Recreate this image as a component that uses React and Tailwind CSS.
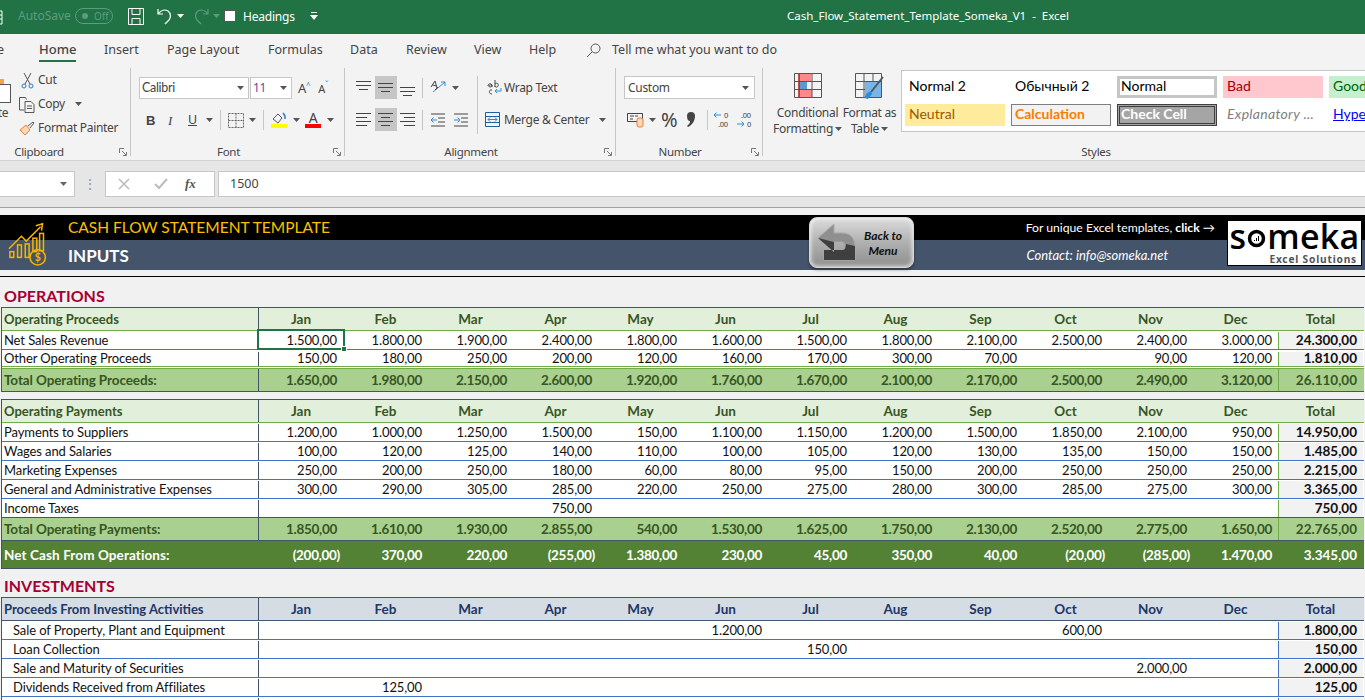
import React from "react";

const CAL = { fontFamily: "Lato, sans-serif" };

const MONTHS = ["Jan", "Feb", "Mar", "Apr", "May", "Jun", "Jul", "Aug", "Sep", "Oct", "Nov", "Dec"];

const proceeds = [
  ["Net Sales Revenue", ["1.500,00", "1.800,00", "1.900,00", "2.400,00", "1.800,00", "1.600,00", "1.500,00", "1.800,00", "2.100,00", "2.500,00", "2.400,00", "3.000,00"], "24.300,00"],
  ["Other Operating Proceeds", ["150,00", "180,00", "250,00", "200,00", "120,00", "160,00", "170,00", "300,00", "70,00", "", "90,00", "120,00"], "1.810,00"],
];
const payments = [
  ["Payments to Suppliers", ["1.200,00", "1.000,00", "1.250,00", "1.500,00", "150,00", "1.100,00", "1.150,00", "1.200,00", "1.500,00", "1.850,00", "2.100,00", "950,00"], "14.950,00"],
  ["Wages and Salaries", ["100,00", "120,00", "125,00", "140,00", "110,00", "100,00", "105,00", "120,00", "130,00", "135,00", "150,00", "150,00"], "1.485,00"],
  ["Marketing Expenses", ["250,00", "200,00", "250,00", "180,00", "60,00", "80,00", "95,00", "150,00", "200,00", "250,00", "250,00", "250,00"], "2.215,00"],
  ["General and Administrative Expenses", ["300,00", "290,00", "305,00", "285,00", "220,00", "250,00", "275,00", "280,00", "300,00", "285,00", "275,00", "300,00"], "3.365,00"],
  ["Income Taxes", ["", "", "", "750,00", "", "", "", "", "", "", "", ""], "750,00"],
];
const investing = [
  ["Sale of Property, Plant and Equipment", ["", "", "", "", "", "1.200,00", "", "", "", "600,00", "", ""], "1.800,00"],
  ["Loan Collection", ["", "", "", "", "", "", "150,00", "", "", "", "", ""], "150,00"],
  ["Sale and Maturity of Securities", ["", "", "", "", "", "", "", "", "", "", "2.000,00", ""], "2.000,00"],
  ["Dividends Received from Affiliates", ["", "125,00", "", "", "", "", "", "", "", "", "", ""], "125,00"],
  ["", ["", "", "", "", "", "", "", "", "", "", "", ""], ""],
];

const Cells = ({ values, selected }) =>
  values.map((v, i) => (
    <div
      key={i}
      className={`relative shrink-0 h-full flex items-center justify-end ${i === 0 ? "w-[84px]" : "w-[85px]"} ${v.startsWith("(") ? "pr-[3px]" : "pr-[6px]"}`}
    >
      {v}
      {selected && i === 0 && (
        <div className="absolute left-[-2px] top-[-3px] w-[88px] h-[21px] border-2 border-[#217346]">
          <div className="absolute right-[-4px] bottom-[-4px] w-[6px] h-[6px] bg-[#217346] border border-white" />
        </div>
      )}
    </div>
  ));

const HeaderRow = ({ title, tone }) => (
  <div className={`flex h-[23px] border-b font-bold text-[13.5px] ${tone === "green" ? "bg-[#e2efda] text-[#375623] border-[#70ad47]" : "bg-[#d6dce4] text-[#203764] border-[#44546a]"}`}>
    <div className="w-[257px] shrink-0 border-r border-[#44546a] pl-[2px] pt-[1px] flex items-center text-[13px]">{title}</div>
    {MONTHS.map((m, i) => (
      <div key={m} className={`shrink-0 flex items-center justify-center ${i === 0 ? "w-[84px]" : "w-[85px]"}`}>{m}</div>
    ))}
    <div className="w-[85px] shrink-0 flex items-center justify-center">Total</div>
  </div>
);

const DataRow = ({ row, indent, line, sideLine, double, selected }) => (
  <div className={`flex h-[19px] bg-white text-[13px] tracking-[-0.1px] text-[#111] ${double ? "border-b-[3px] border-double border-[#70ad47] pt-[2px]" : "border-b pt-[1px]"} ${double ? "" : line}`}>
    <div className={`w-[257px] shrink-0 border-r border-[#44546a] flex items-center ${indent ? "pl-[11px]" : "pl-[2px]"}`}>{row[0]}</div>
    <Cells values={row[1]} selected={selected} />
    <div className={`w-[85px] shrink-0 bg-[#f2f2f2] border-l ${sideLine} font-bold text-[13.5px] tracking-normal pr-[6px] pb-[1px] flex items-center justify-end`}>{row[2]}</div>
  </div>
);

const TotalRow = ({ title, values, total }) => (
  <div className="flex h-[23px] bg-[#a9d08e] text-[#375623] font-bold text-[13.5px] tracking-[-0.3px] border-b border-[#44546a]">
    <div className="w-[257px] shrink-0 border-r border-[#44546a] pl-[2px] flex items-center tracking-[-0.1px]">{title}</div>
    <Cells values={values} />
    <div className="w-[85px] shrink-0 border-l border-[#70ad47] pr-[6px] flex items-center justify-end tracking-normal">{total}</div>
  </div>
);

const Lines = ({ rows }) => (
  <svg width="22" height="22" viewBox="0 0 22 22" stroke="#444" strokeWidth="1" shapeRendering="crispEdges">
    {rows.map((r, i) => (
      <line key={i} x1={r[0]} x2={r[1]} y1={r[2]} y2={r[2]} />
    ))}
  </svg>
);

const Btn = ({ on, rows }) => (
  <div className={`w-[22px] h-[23px] flex items-center justify-center ${on ? "bg-[#c6c6c6]" : ""}`}>
    <Lines rows={rows} />
  </div>
);

const Caret = ({ color = "#555" }) => (
  <svg width="7" height="4" viewBox="0 0 7 4"><path d="M0 0h7L3.5 4z" fill={color} /></svg>
);

const Launcher = () => (
  <svg width="8" height="8" viewBox="0 0 8 8" fill="none" stroke="#777"><path d="M.5 5V.5H5M3 3l4 4M7.5 4v3.5H4" /></svg>
);

const Sep = ({ h = "h-[20px]" }) => <div className={`w-px ${h} bg-[#c6c6c6]`} />;

const Group = ({ width, label, labelPad = "pr-[18px]", children, launcher = true }) => (
  <div className={`relative shrink-0 h-full flex flex-col border-r border-[#c6c6c6] ${width}`}>
    <div className="flex-1 min-h-0">{children}</div>
    <div className={`h-[15px] pt-[6px] flex items-center justify-center text-[11.5px] text-[#444] leading-none ${labelPad}`}>{label}</div>
    {launcher && <div className="absolute right-[3px] bottom-[0px] leading-none"><Launcher /></div>}
  </div>
);

const StyleCell = ({ className, children }) => (
  <div className={`w-[100px] h-[22px] shrink-0 flex items-center pb-[2px] text-[14px] leading-none ${className}`} style={CAL}>{children}</div>
);

const GrowthIcon = () => (
  <svg width="46" height="46" viewBox="0 0 48 48" fill="none" stroke="#f5b400" strokeWidth="1.6">
    <path d="M1 30 14 17l5 5L34 7" />
    <path d="M29 6l7-2-1 7" />
    <rect x="2" y="33" width="4" height="6" />
    <rect x="10" y="26" width="4" height="13" />
    <rect x="18" y="25" width="4" height="14" />
    <rect x="26" y="19" width="4" height="14" />
    <rect x="33" y="14" width="4" height="18" />
    <circle cx="31" cy="39" r="8" />
    <text x="31" y="43" fontSize="11" fontWeight="700" fill="#f5b400" stroke="none" textAnchor="middle" fontFamily="Lato, sans-serif">$</text>
  </svg>
);

const App = () => {
  return (
    <div className="w-[1365px] h-[700px] overflow-hidden bg-[#f1f1f1] flex flex-col" style={{ fontFamily: '"Noto Sans", sans-serif' }}>
      {/* title bar */}
      <div className="relative h-[34px] shrink-0 bg-[#217346] flex items-center pb-[2px] text-white text-[12px]">
        <svg className="absolute left-[-7px] top-[10px]" width="11" height="15" viewBox="0 0 11 15" fill="none" stroke="#fff"><path d="M0 1h9v13H0M0 5h9M0 9h9M5 1v13" /></svg>
        <span className="ml-[18px] w-[50px] text-[#5d9c7f] text-[12px]">AutoSave</span>
        <div className="ml-[7px] w-[38px] h-[16px] rounded-full border border-[#5d9c7f] flex items-center pl-[6px] gap-[6px]">
          <div className="w-[6px] h-[6px] rounded-full bg-[#5d9c7f]" />
          <span className="text-[10px] text-[#5d9c7f] leading-none">Off</span>
        </div>
        <svg className="ml-[15px]" width="16" height="17" viewBox="0 0 16 17" fill="none" stroke="#fff"><path d="M.5.5h15v16H.5zM4 .5v6h8v-6M4 16.5v-6h8v6" /></svg>
        <svg className="ml-[13px]" width="16" height="18" viewBox="0 0 16 18" fill="none" stroke="#fff" strokeWidth="1.2"><path d="M1 2v5h5M1 7c3-4 7-5 10-3s3 7 1 9l-4 4" /></svg>
        <div className="ml-[4px]"><Caret color="#fff" /></div>
        <svg className="ml-[10px]" width="15" height="18" viewBox="0 0 15 18" fill="none" stroke="#5d9c7f" strokeWidth="1.2"><path d="M14 2v5H9M14 7c-3-4-7-5-10-3S1 11 3 13l4 4" /></svg>
        <div className="ml-[4px]"><Caret color="#5d9c7f" /></div>
        <div className="ml-[4px] w-[12px] h-[12px] bg-white border border-[#555]" />
        <span className="ml-[7px] w-[49px] text-[12px] tracking-[-0.2px] pt-[1px]">Headings</span>
        <svg className="ml-[18px]" width="8" height="8" viewBox="0 0 8 8" fill="#fff"><path d="M1 0h6v1H1zM0 3h8L4 8z" /></svg>
        <div className="absolute left-[787px] top-0 h-full pb-[2px] flex items-center text-[11.5px]">Cash_Flow_Statement_Template_Someka_V1&nbsp; -&nbsp; Excel</div>
      </div>

      {/* tabs */}
      <div className="h-[34px] shrink-0 bg-[#f3f3f3] flex items-center pb-[2px] text-[12.5px] text-[#444] relative">
        <span className="ml-[-3px] w-[42px]">e</span>
        <div className="relative font-medium text-[13px] text-[#444] w-[37px]">
          Home
          <div className="absolute left-0 right-0 top-[20px] h-[2px] bg-[#217346]" />
        </div>
        <span className="ml-[28px] w-[32px]">Insert</span>
        <span className="ml-[31px] w-[71px] whitespace-nowrap">Page Layout</span>
        <span className="ml-[30px] w-[53px]">Formulas</span>
        <span className="ml-[29px] w-[27px]">Data</span>
        <span className="ml-[29px] w-[40px]">Review</span>
        <span className="ml-[28px] w-[27px]">View</span>
        <span className="ml-[28px] w-[27px]">Help</span>
        <svg className="ml-[30px]" width="15" height="15" viewBox="0 0 15 15" fill="none" stroke="#555"><circle cx="9.5" cy="5.5" r="4.5" /><path d="M6 9l-5 5" /></svg>
        <span className="ml-[11px] whitespace-nowrap">Tell me what you want to do</span>
      </div>

      {/* ribbon */}
      <div className="h-[93px] shrink-0 bg-[#f3f3f3] border-b border-[#d2d2d2] flex pb-[4px] text-[12px] tracking-[-0.3px] text-[#444]">
        <Group width="w-[131px]" label="Clipboard" labelPad="pr-[52px]">
          <div className="relative h-full">
            <div className="absolute left-[-10px] top-[16px] w-[21px] h-[19px] bg-white border border-[#555]" />
            <div className="absolute left-0 top-[11px] w-[4px] h-[5px] bg-[#f3a545]" />
            <div className="absolute left-[-21px] top-[36px] text-[12px]">Paste</div>
            <div className="pl-[21px] flex flex-col">
              <div className="h-[24px] flex items-center gap-[4px]">
                <svg width="13" height="17" viewBox="0 0 13 17" fill="none"><path d="M3 1l6 11M10 1L4 12" stroke="#555" /><circle cx="3" cy="14" r="2" stroke="#2b7cd3" /><circle cx="10" cy="14" r="2" stroke="#2b7cd3" /></svg>
                Cut
              </div>
              <div className="h-[24px] flex items-center gap-[2px] ml-[-2px]">
                <svg width="17" height="17" viewBox="0 0 17 17" fill="none" stroke="#555"><path d="M5 14H.5V1.500h6l1 2M6 5.500h6l3 3v8H6zM8 10h5M8 12.500h5" /></svg>
                Copy
                <div className="ml-[8px]"><Caret /></div>
              </div>
              <div className="h-[24px] flex items-center gap-[3px] ml-[-2px] whitespace-nowrap">
                <svg width="16" height="15" viewBox="0 0 16 15" fill="none"><path d="M1 9l6-5 4 5-5 5z" stroke="#ed7d31" fill="#fbd9b8" /><path d="M9 5l5-4 1 1-4 5" stroke="#555" /></svg>
                Format Painter
              </div>
            </div>
          </div>
        </Group>

        <Group width="w-[214px]" label="Font">
          <div className="pl-[8px] pt-[9px]">
            <div className="flex items-center h-[22px]">
              <div className="w-[110px] h-[22px] bg-white border border-[#c6c6c6] flex items-center justify-between pl-[2px] pr-[4px]" style={CAL}>
                <span className="text-[12.5px]">Calibri</span><Caret />
              </div>
              <div className="ml-[1px] w-[42px] h-[22px] bg-white border border-[#c6c6c6] flex items-center justify-between pl-[2px] pr-[4px]">
                <span className="text-[#7a3e9d]">11</span><Caret />
              </div>
              <span className="ml-[6px] text-[13px] leading-none">A</span>
              <span className="text-[8px] text-[#2b7cd3] mb-[6px] leading-none">^</span>
              <span className="ml-[8px] text-[11px] leading-none">A</span>
              <span className="text-[8px] text-[#2b7cd3] mb-[6px] leading-none">ˇ</span>
            </div>
            <div className="flex items-center h-[22px] mt-[10px]">
              <span className="ml-[7px] font-bold text-[13px] w-[10px] leading-none" style={{ fontFamily: '"Liberation Sans"' }}>B</span>
              <span className="ml-[12px] italic text-[13px] w-[8px] leading-none" style={{ fontFamily: '"Liberation Serif"' }}>I</span>
              <span className="ml-[12px] underline text-[12.5px] w-[10px] leading-none">U</span>
              <div className="ml-[8px]"><Caret /></div>
              <div className="ml-[7px]"><Sep /></div>
              <svg className="ml-[7px]" width="16" height="15" viewBox="0 0 16 15" fill="none" stroke="#666" strokeDasharray="2 1"><path d="M.5.500h15v14H.5zM8 .5v14M.5 7.500h15" /></svg>
              <div className="ml-[5px]"><Caret /></div>
              <div className="ml-[7px]"><Sep /></div>
              <div className="ml-[7px] flex flex-col items-center w-[16px]">
                <svg width="15" height="12" viewBox="0 0 15 12" fill="none"><path d="M1 7l5-5 4 4-4 5z" stroke="#555" /><path d="M11 1l2 3v3" stroke="#2b7cd3" strokeWidth="1.5" /></svg>
                <div className="w-[16px] h-[4px] bg-[#ffff00]" />
              </div>
              <div className="ml-[6px]"><Caret /></div>
              <div className="ml-[5px] flex flex-col items-center w-[16px]">
                <span className="text-[14px] leading-[12px]">A</span>
                <div className="w-[16px] h-[4px] bg-[#ff0000]" />
              </div>
              <div className="ml-[6px]"><Caret /></div>
            </div>
          </div>
        </Group>

        <Group width="w-[271px]" label="Alignment">
          <div className="flex pl-[8px] pt-[8px]">
            <div className="flex flex-col gap-[9px] w-[124px]">
              <div className="flex items-center">
                <Btn rows={[[3, 18, 4], [3, 18, 8], [6, 15, 12]]} />
                <Btn on rows={[[3, 18, 6], [3, 18, 10], [6, 15, 14]]} />
                <Btn rows={[[3, 18, 10], [3, 18, 14], [6, 15, 18]]} />
                <div className="ml-[3px]"><Sep /></div>
                <svg className="ml-[7px]" width="18" height="18" viewBox="0 0 18 18" fill="none"><path d="M3 13L15 3M11 3h4v4" stroke="#2b8fd8" /><path d="M1 8l4-6 2 7M2.500 6l4 1M5 11l3-3" stroke="#444" /></svg>
                <div className="ml-[4px]"><Caret /></div>
              </div>
              <div className="flex items-center">
                <Btn rows={[[3, 18, 4], [3, 14, 8], [3, 18, 12], [3, 14, 16]]} />
                <Btn on rows={[[3, 18, 4], [6, 15, 8], [3, 18, 12], [6, 15, 16]]} />
                <Btn rows={[[3, 18, 4], [7, 18, 8], [3, 18, 12], [7, 18, 16]]} />
                <div className="ml-[3px]"><Sep /></div>
                <svg className="ml-[7px]" width="16" height="14" viewBox="0 0 16 14" fill="none"><path d="M1 1h14M8 5h7M8 9h7M1 13h14" stroke="#444" /><path d="M7 7H1M3.500 4.500L1 7l2.500 2.500" stroke="#2b8fd8" /></svg>
                <svg className="ml-[7px]" width="16" height="14" viewBox="0 0 16 14" fill="none"><path d="M1 1h14M8 5h7M8 9h7M1 13h14" stroke="#444" /><path d="M1 7h6M4.500 4.500L7 7 4.500 9.500" stroke="#2b8fd8" /></svg>
              </div>
            </div>
            <Sep h="h-[58px]" />
            <div className="pl-[7px] flex flex-col">
              <div className="h-[23px] flex items-center gap-[2px] pl-[2px] whitespace-nowrap">
                <svg width="15" height="17" viewBox="0 0 15 17" fill="none"><path d="M1 7c0-3 4-3 4 0v1M5 6c-3-1-4 2-2 2s2-1 2-2M8 1v7M8 5c2-2 4 0 3 2s-3 1-3 0M5 11c-3-1-4 4 0 4" stroke="#444" /><path d="M14 9v3H8M10 10l-2 2 2 2" stroke="#2b8fd8" /></svg>
                Wrap Text
              </div>
              <div className="h-[23px] mt-[9px] flex items-center gap-[4px] whitespace-nowrap">
                <svg width="15" height="15" viewBox="0 0 15 15" fill="none"><path d="M.5.500h14v14H.5z" stroke="#1f5f9e" /><path d="M.5 4.500h14M.5 10.500h14" stroke="#1f5f9e" /><path d="M3 7.500h9M5 5.500l-2 2 2 2M10 5.500l2 2-2 2" stroke="#2b8fd8" /></svg>
                Merge &amp; Center
                <div className="ml-[6px]"><Caret /></div>
              </div>
            </div>
          </div>
        </Group>

        <Group width="w-[147px]" label="Number">
          <div className="pl-[8px] pt-[8px]">
            <div className="w-[131px] h-[23px] bg-white border border-[#c6c6c6] flex items-center justify-between pl-[3px] pr-[5px]">
              Custom<Caret />
            </div>
            <div className="flex items-center h-[23px] mt-[9px]">
              <svg className="ml-[3px]" width="17" height="16" viewBox="0 0 17 16" fill="none"><path d="M.5 1.500h15v8H.5zM3 4h4M3 7h3M8 4h3" stroke="#444" /><rect x="10" y="6" width="6" height="9" rx="2" fill="#fbd9b8" stroke="#ed7d31" /></svg>
              <div className="ml-[5px]"><Caret /></div>
              <span className="ml-[5px] text-[20px] leading-none text-[#444] w-[18px]">%</span>
              <svg className="ml-[7px]" width="10" height="16" viewBox="0 0 10 16" fill="#444"><path d="M1 4a4 4 0 1 1 8 0c0 5-3 9-7 11l-1-1c2-1.500 3-3 3-5-2 0-3-2-3-5z" /></svg>
              <div className="ml-[11px]"><Sep /></div>
              <svg className="ml-[5px]" width="18" height="18" viewBox="0 0 18 18" fill="none"><path d="M8 4H1M3.500 1.500L1 4l2.500 2.500" stroke="#2b8fd8" /><text x="11" y="7" fontSize="7.5" fill="#444">0</text><text x="5" y="16" fontSize="7.5" fill="#444">.00</text></svg>
              <svg className="ml-[5px]" width="18" height="18" viewBox="0 0 18 18" fill="none"><path d="M1 13h7M5.500 10.500L8 13l-2.500 2.500" stroke="#2b8fd8" /><text x="5" y="7" fontSize="7.5" fill="#444">.00</text><text x="11" y="16" fontSize="7.5" fill="#444">0</text></svg>
            </div>
          </div>
        </Group>

        <Group width="flex-1" label="Styles" launcher={false} labelPad="">
          <div className="flex pt-[2px]">
            <div className="w-[67px] ml-[11px] shrink-0 flex flex-col items-center text-center leading-[16px] whitespace-nowrap">
              <svg className="mt-[3px] mb-[7px]" width="28" height="25" viewBox="0 0 28 25" fill="none" stroke="#555"><path d="M.5.500h27v24H.5z" /><rect x="5" y="1" width="12" height="7" fill="#f88" stroke="none" /><rect x="5" y="9" width="8" height="7" fill="#5b9bd5" stroke="none" /><rect x="5" y="17" width="13" height="7" fill="#f88" stroke="none" /><path d="M5 .5v24M18 .5v24M.5 8.500h27M.5 16.500h27" /><path d="M5 1v23" stroke="#d00" /></svg>
              <span>Conditional</span>
              <span className="flex items-center gap-[2px]">Formatting <Caret /></span>
            </div>
            <div className="w-[57px] shrink-0 flex flex-col items-center text-center leading-[16px] whitespace-nowrap">
              <svg className="mt-[3px] mb-[5px]" width="30" height="27" viewBox="0 0 30 27" fill="none" stroke="#555"><path d="M.5.500h26v24H.5zM9 .5v24M18 .5v24M.5 8.500h26M.5 16.500h26" /><rect x="10" y="9" width="16" height="15" fill="#7ab5ea" stroke="none" /><path d="M28 4L16 19" stroke="#555" strokeWidth="2" /><path d="M12 20l4-2 1 3-4 5-4-1z" fill="#2b8fd8" stroke="none" /></svg>
              <span>Format as</span>
              <span className="flex items-center gap-[2px]">Table <Caret /></span>
            </div>
            <div className="ml-[3px] flex-1 h-[62px] bg-white border border-[#c6c6c6] border-r-0 pl-[3px] pt-[5px] overflow-hidden tracking-normal">
              <div className="flex gap-[6px]">
                <StyleCell className="text-black pl-[4px]">Normal 2</StyleCell>
                <StyleCell className="text-black pl-[4px]">Обычный 2</StyleCell>
                <StyleCell className="text-black border-[3px] border-[#c6c6c6] pl-[1px]">Normal</StyleCell>
                <StyleCell className="bg-[#ffc7ce] text-[#9c0006] pl-[4px]">Bad</StyleCell>
                <StyleCell className="bg-[#c6efce] text-[#006100] pl-[4px]">Good</StyleCell>
              </div>
              <div className="flex gap-[6px] mt-[6px]">
                <StyleCell className="bg-[#ffeb9c] text-[#9c5700] pl-[4px]">Neutral</StyleCell>
                <StyleCell className="bg-[#f2f2f2] text-[#fa7d00] font-bold border border-[#7f7f7f] pl-[3px]">Calculation</StyleCell>
                <StyleCell className="bg-[#a5a5a5] text-white font-bold border-[3px] border-double border-[#3f3f3f] pl-[1px]">Check Cell</StyleCell>
                <StyleCell className="text-[#7f7f7f] italic pl-[4px] tracking-[0.3px]">Explanatory ...</StyleCell>
                <StyleCell className="text-[#0000ff] underline pl-[4px]">Hyperlink</StyleCell>
              </div>
            </div>
          </div>
        </Group>
      </div>

      {/* formula bar */}
      <div className="h-[47px] shrink-0 bg-[#e6e6e6] border-b border-[#a0a0a0] pt-[10px]">
        <div className="h-[26px] flex items-stretch">
          <div className="w-[75px] bg-white border border-[#c6c6c6] border-l-0 flex items-center justify-end pr-[7px]"><Caret color="#666" /></div>
          <div className="w-[30px] flex items-center justify-center text-[#999] leading-none text-[14px]">⋮</div>
          <div className="w-[110px] bg-white border border-[#c6c6c6] flex items-center pl-[12px]">
            <svg width="12" height="12" viewBox="0 0 12 12" stroke="#bbb" strokeWidth="1.500"><path d="M1 1l10 10M11 1L1 11" /></svg>
            <svg className="ml-[24px]" width="14" height="12" viewBox="0 0 14 12" fill="none" stroke="#bbb" strokeWidth="2"><path d="M1 6l4 4 8-9" /></svg>
            <span className="ml-[17px] italic text-[13px] text-[#555] font-bold" style={{ fontFamily: '"Liberation Serif"' }}>fx</span>
          </div>
          <div className="ml-[3px] flex-1 bg-white border border-[#c6c6c6] border-r-0 flex items-center pl-[11px] pt-[1px] text-[12.5px] text-[#444]">1500</div>
        </div>
      </div>

      {/* sheet */}
      <div className="flex-1 min-h-0 overflow-hidden pt-[7px]" style={CAL}>
        <div className="relative h-[55px]">
          <div className="h-[25px] bg-black flex items-center pl-[68px] pt-[1px] text-white">
            <span className="text-[#ffc000] text-[15.5px] leading-none">CASH FLOW STATEMENT TEMPLATE</span>
            <span className="ml-auto mr-[150px] text-[12.2px] leading-none">For unique Excel templates, <b>click</b> →</span>
          </div>
          <div className="h-[30px] bg-[#44546a] flex items-center pl-[68px] pt-[1px] text-white">
            <span className="font-bold text-[17px] leading-none">INPUTS</span>
            <span className="ml-auto mr-[197px] text-[13px] italic leading-none">Contact: info@someka.net</span>
          </div>
          <div className="absolute left-[8px] top-[5px]"><GrowthIcon /></div>
          <div className="absolute left-[809px] top-[2px] w-[105px] h-[51px] rounded-[8px] bg-gradient-to-b from-[#dcdcdc] via-[#b0b0b0] to-[#8e8e8e] border border-[#d8d8d8] shadow-[inset_0_0_5px_#ffffff,0_2px_3px_rgba(0,0,0,0.35)] flex items-center pl-[6px]">
            <svg width="40" height="42" viewBox="0 0 40 42">
              <path d="M2 16 18 2v9h8c8 0 13 5 13 14v13H8V28h19c2 0 2-8 0-8h-9v10z" fill="#8f8f8f" stroke="#a9a9a9" />
              <path d="M2 16l16 14V20zM8 38V28h19c2 0 3-3 3-6l9 2v14z" fill="#3f3f3f" />
            </svg>
            <div className="ml-[5px] w-[44px] text-center text-[12px] leading-[15px] italic font-bold text-[#111]">Back to<br />Menu</div>
          </div>
          <div className="absolute left-[1227px] top-[5px] w-[135px] h-[46px] bg-white border border-black flex flex-col items-center justify-start overflow-hidden">
            <div className="flex items-center text-black text-[34px] font-semibold leading-[30px] h-[30px] tracking-[0.2px]" style={{ fontFamily: '"Open Sans", sans-serif' }}>
              s
              <svg className="mx-[1px] mt-[5px]" width="19" height="19" viewBox="0 0 19 19"><circle cx="9.500" cy="9.500" r="7" fill="none" stroke="#000" strokeWidth="3.500" /><path d="M7 11h1v1H7zM9 9h1v3H9zM11 7h1v5h-1z" fill="#000" /></svg>
              meka
            </div>
            <div className="self-end mt-[2px] pr-[4px] text-[10.2px] font-bold tracking-[0.8px] text-[#555] leading-[12px]" style={{ fontFamily: '"Noto Sans", sans-serif' }}>Excel Solutions</div>
          </div>
        </div>
        <div className="mt-[6px] h-[1px] bg-black" />

        <div className="h-[30px] flex items-end pb-[3px] pl-[4px] text-[16px] font-bold text-[#a50034] leading-none">OPERATIONS</div>
        <div className="ml-[1px] w-[1363px] border border-[#44546a] border-b-0 border-r-0">
          <HeaderRow title="Operating Proceeds" tone="green" />
          <DataRow row={proceeds[0]} line="border-[#4472c4]" sideLine="border-[#70ad47]" selected />
          <DataRow row={proceeds[1]} sideLine="border-[#70ad47]" double />
          <TotalRow title="Total Operating Proceeds:" values={["1.650,00", "1.980,00", "2.150,00", "2.600,00", "1.920,00", "1.760,00", "1.670,00", "2.100,00", "2.170,00", "2.500,00", "2.490,00", "3.120,00"]} total="26.110,00" />
        </div>

        <div className="ml-[1px] mt-[7px] w-[1363px] border border-[#44546a] border-b-0 border-r-0">
          <HeaderRow title="Operating Payments" tone="green" />
          {payments.map((r, i) => (
            <DataRow key={r[0]} row={r} line={i === 4 ? "border-[#44546a]" : "border-[#4472c4]"} sideLine="border-[#70ad47]" />
          ))}
          <TotalRow title="Total Operating Payments:" values={["1.850,00", "1.610,00", "1.930,00", "2.855,00", "540,00", "1.530,00", "1.625,00", "1.750,00", "2.130,00", "2.520,00", "2.775,00", "1.650,00"]} total="22.765,00" />
          <div className="flex h-[28px] pt-[1px] bg-[#548235] text-white font-bold text-[13.5px] tracking-[-0.3px] border-b border-[#44546a]">
            <div className="w-[257px] shrink-0 pl-[2px] flex items-center tracking-[0.1px]">Net Cash From Operations:</div>
            <Cells values={["(200,00)", "370,00", "220,00", "(255,00)", "1.380,00", "230,00", "45,00", "350,00", "40,00", "(20,00)", "(285,00)", "1.470,00"]} />
            <div className="w-[85px] shrink-0 pr-[6px] flex items-center justify-end tracking-normal">3.345,00</div>
          </div>
        </div>

        <div className="h-[28px] flex items-end pb-[3px] pl-[4px] text-[16px] font-bold text-[#a50034] leading-none">INVESTMENTS</div>
        <div className="ml-[1px] w-[1363px] border border-[#44546a] border-b-0 border-r-0">
          <HeaderRow title="Proceeds From Investing Activities" tone="blue" />
          {investing.map((r, i) => (
            <DataRow key={i} row={r} indent line="border-[#4472c4]" sideLine="border-[#4472c4]" />
          ))}
        </div>
      </div>
    </div>
  );
};

export default App;
